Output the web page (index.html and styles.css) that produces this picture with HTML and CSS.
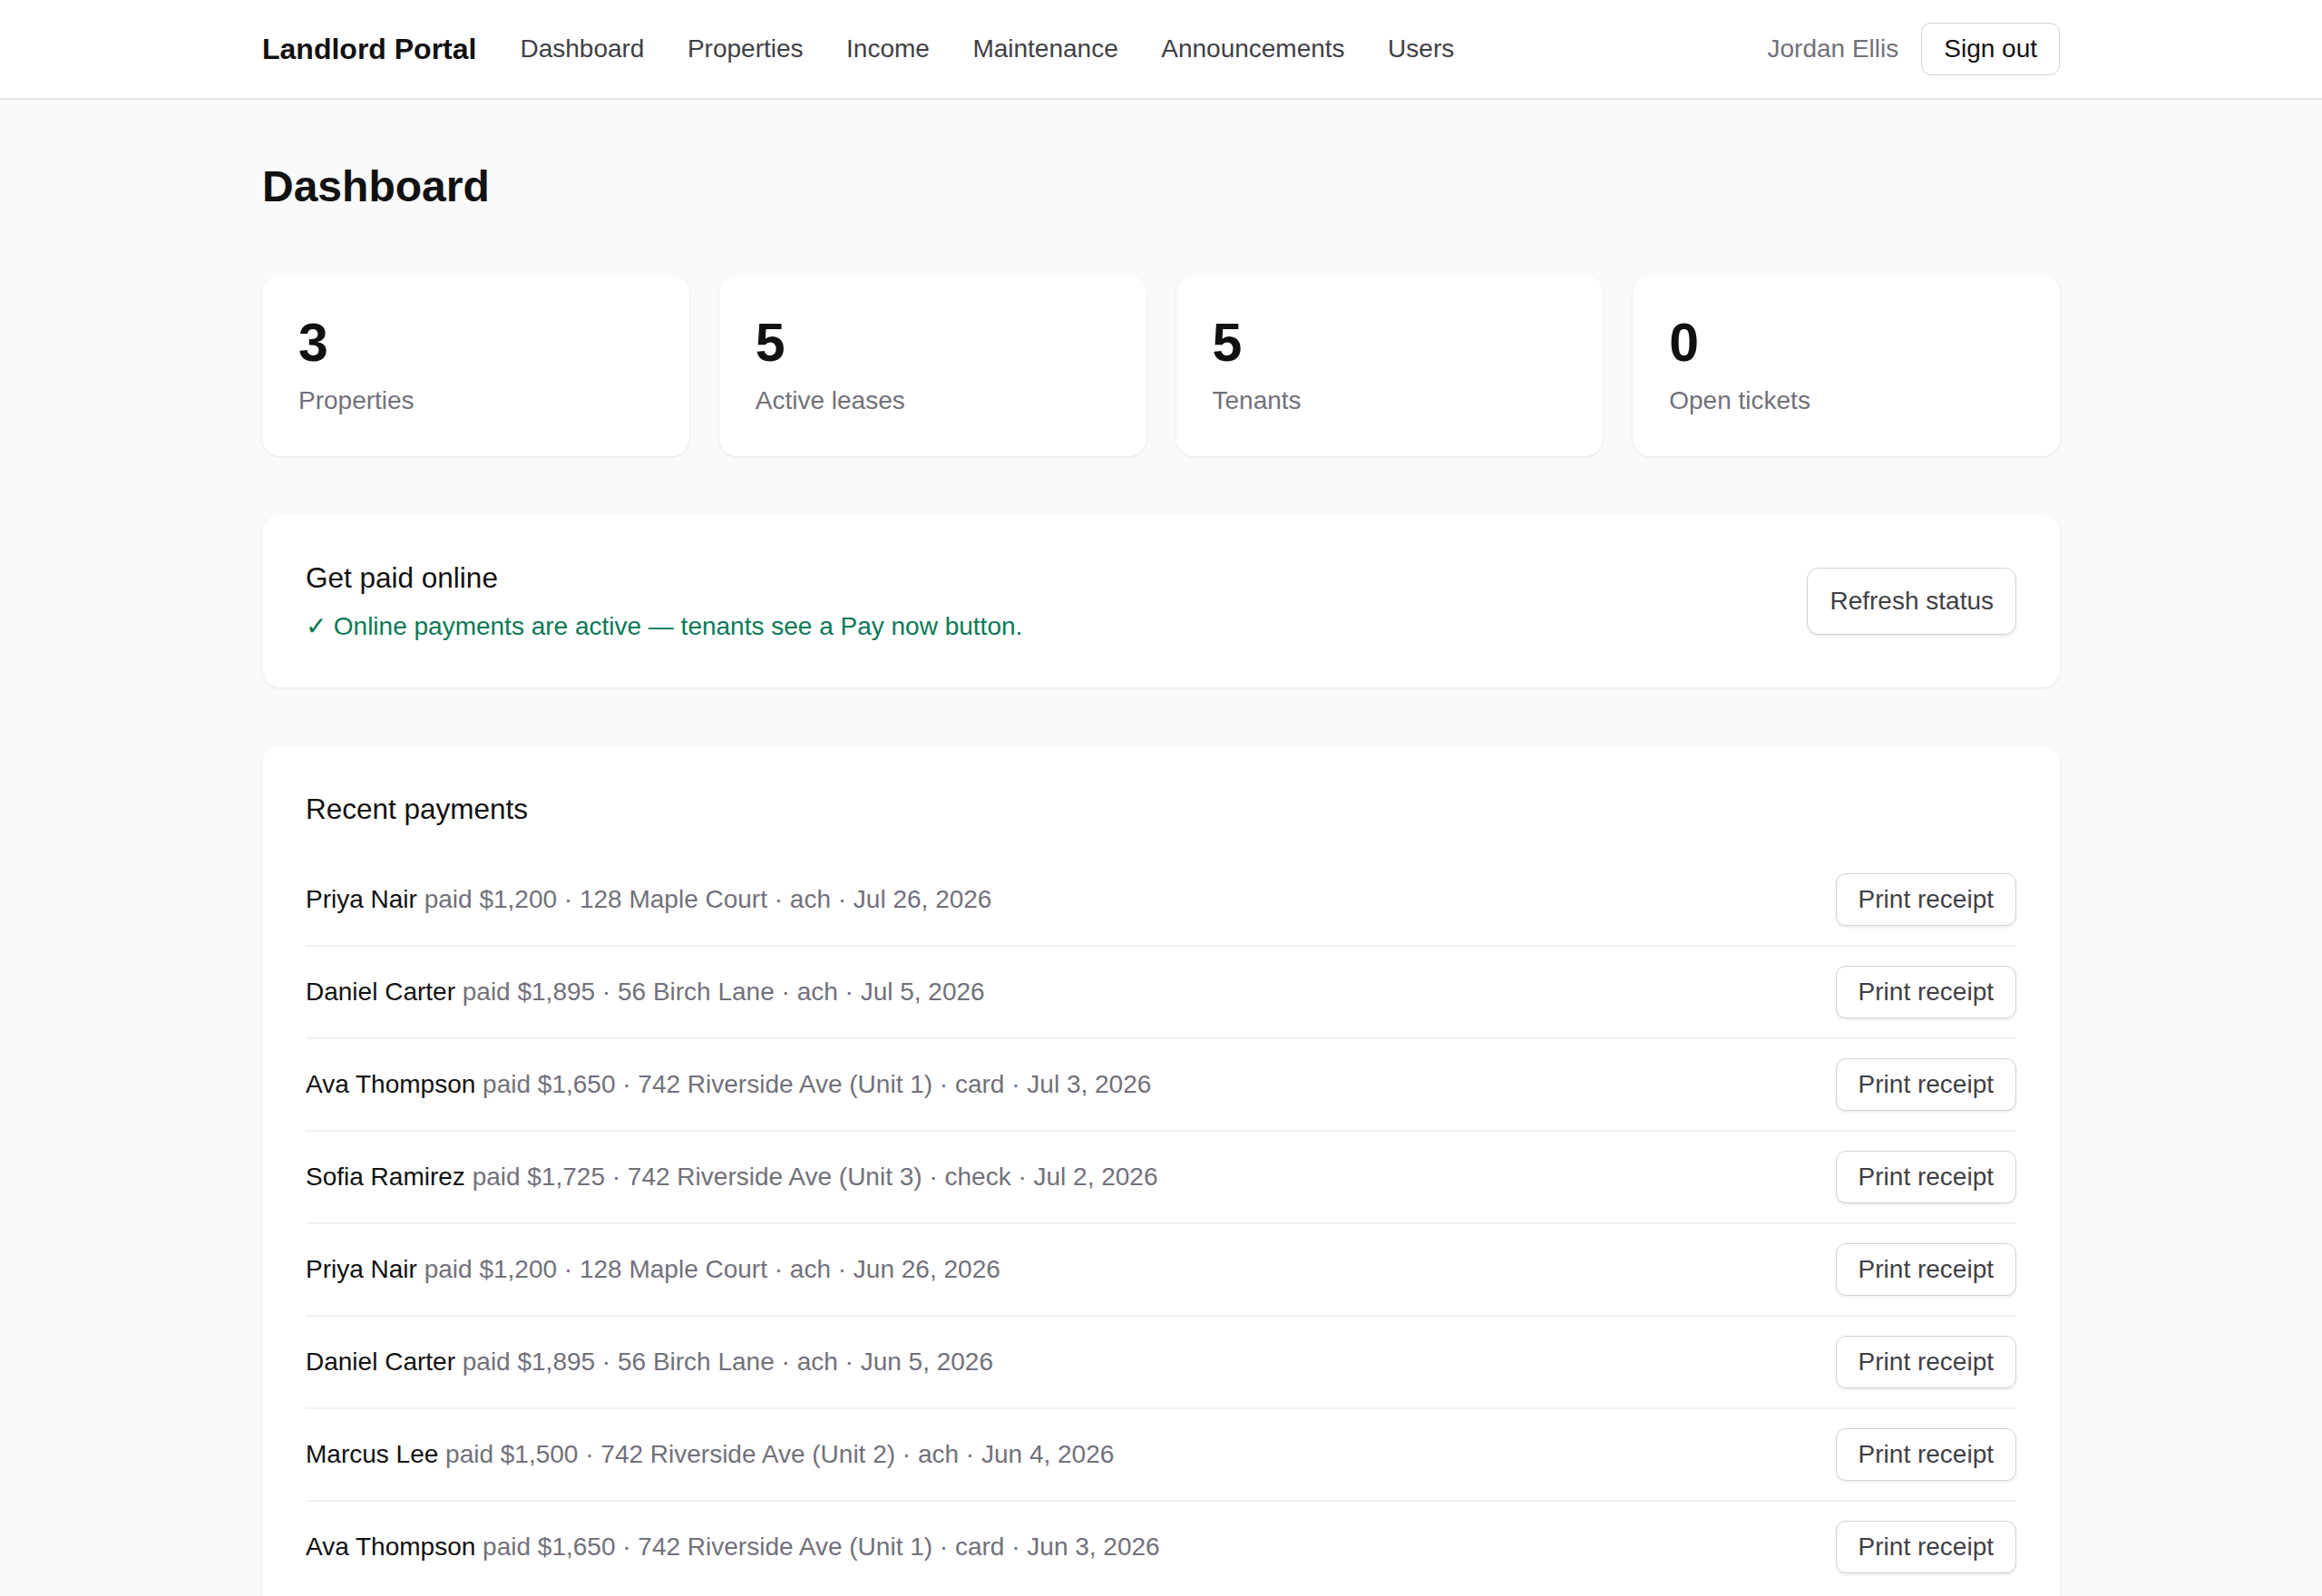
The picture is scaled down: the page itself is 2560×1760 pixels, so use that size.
FILE: index.html
```html
<!DOCTYPE html>
<html>
<head>
    <title>Landlord Portal - Dashboard</title>
    <link rel="stylesheet" href="styles.css">
</head>
<body>
    <header class="topbar">
        <div class="topbar-inner">
            <div class="brand">Landlord Portal</div>
            <nav class="nav">
                <a href="#">Dashboard</a>
                <a href="#">Properties</a>
                <a href="#">Income</a>
                <a href="#">Maintenance</a>
                <a href="#">Announcements</a>
                <a href="#">Users</a>
            </nav>
            <div class="user">
                <span class="user-name">Jordan Ellis</span>
                <button class="btn btn-dark">Sign out</button>
            </div>
        </div>
    </header>

    <main class="page">
        <h1>Dashboard</h1>

        <div class="stats">
            <div class="stat">
                <div class="stat-num">3</div>
                <div class="stat-label">Properties</div>
            </div>
            <div class="stat">
                <div class="stat-num">5</div>
                <div class="stat-label">Active leases</div>
            </div>
            <div class="stat">
                <div class="stat-num">5</div>
                <div class="stat-label">Tenants</div>
            </div>
            <div class="stat">
                <div class="stat-num">0</div>
                <div class="stat-label">Open tickets</div>
            </div>
        </div>

        <section class="panel panel-row">
            <div>
                <h2>Get paid online</h2>
                <div class="ok">✓ Online payments are active — tenants see a Pay now button.</div>
            </div>
            <button class="btn btn-big">Refresh status</button>
        </section>

        <section class="panel">
            <h2>Recent payments</h2>
            <div class="payments">
                <div class="pay">
                    <div><span class="who">Priya Nair</span> <span class="meta">paid $1,200 · 128 Maple Court · ach · Jul 26, 2026</span></div>
                    <button class="btn">Print receipt</button>
                </div>
                <div class="pay">
                    <div><span class="who">Daniel Carter</span> <span class="meta">paid $1,895 · 56 Birch Lane · ach · Jul 5, 2026</span></div>
                    <button class="btn">Print receipt</button>
                </div>
                <div class="pay">
                    <div><span class="who">Ava Thompson</span> <span class="meta">paid $1,650 · 742 Riverside Ave (Unit 1) · card · Jul 3, 2026</span></div>
                    <button class="btn">Print receipt</button>
                </div>
                <div class="pay">
                    <div><span class="who">Sofia Ramirez</span> <span class="meta">paid $1,725 · 742 Riverside Ave (Unit 3) · check · Jul 2, 2026</span></div>
                    <button class="btn">Print receipt</button>
                </div>
                <div class="pay">
                    <div><span class="who">Priya Nair</span> <span class="meta">paid $1,200 · 128 Maple Court · ach · Jun 26, 2026</span></div>
                    <button class="btn">Print receipt</button>
                </div>
                <div class="pay">
                    <div><span class="who">Daniel Carter</span> <span class="meta">paid $1,895 · 56 Birch Lane · ach · Jun 5, 2026</span></div>
                    <button class="btn">Print receipt</button>
                </div>
                <div class="pay">
                    <div><span class="who">Marcus Lee</span> <span class="meta">paid $1,500 · 742 Riverside Ave (Unit 2) · ach · Jun 4, 2026</span></div>
                    <button class="btn">Print receipt</button>
                </div>
                <div class="pay">
                    <div><span class="who">Ava Thompson</span> <span class="meta">paid $1,650 · 742 Riverside Ave (Unit 1) · card · Jun 3, 2026</span></div>
                    <button class="btn">Print receipt</button>
                </div>
            </div>
        </section>
    </main>
</body>
</html>
```

FILE: styles.css
```css
body { margin: 0; background: #fafafa; color: #111; font-family: "Liberation Sans", Arial, sans-serif; font-size: 28px; }
a { color: inherit; text-decoration: none; }

.topbar { background: #fff; border-bottom: 2px solid #e4e4e6; }
.topbar-inner { width: 1982px; margin: 0 auto; height: 108px; display: flex; align-items: center; }
.brand { font-weight: bold; font-size: 32px; margin-right: 48px; }
.nav { display: flex; gap: 47.5px; color: #3f3f46; }
.user { margin-left: auto; display: flex; align-items: center; gap: 25px; }
.user-name { color: #71717a; }

.btn { font-family: inherit; font-size: 28px; color: #3f3f46; background: #fff; border: 1px solid #d2d2d7; border-radius: 11px; padding: 12px 24px; box-shadow: 0 2px 3px rgba(0,0,0,0.07); cursor: pointer; }
.btn-dark { color: #111; box-shadow: none; }
.btn-big { padding: 20px 24px; border-radius: 13px; }

.page { width: 1982px; margin: 0 auto; padding-top: 68px; }
h1 { font-size: 48px; margin: 0 0 69.5px; }
h2 { font-size: 31.5px; font-weight: normal; margin: 0; line-height: 1.5; }

.stats { display: grid; grid-template-columns: repeat(4, 1fr); gap: 33px; margin-bottom: 64px; }
.stat { background: #fff; border-radius: 20px; padding: 41px 40px 45px; box-shadow: 0 1px 3px rgba(0,0,0,0.09); }
.stat-num { font-size: 59px; font-weight: bold; margin-bottom: 14px; }
.stat-label { color: #71717a; }

.panel { background: #fff; border-radius: 20px; padding: 47px 48px 49px; box-shadow: 0 1px 3px rgba(0,0,0,0.09); margin-bottom: 64px; line-height: 1.5; }
.panel-row { display: flex; align-items: center; justify-content: space-between; padding-bottom: 46px; }
.ok { color: #087a55; margin-top: 9px; }

.payments { margin-top: 26px; }
.pay { display: flex; align-items: center; justify-content: space-between; padding: 21px 0; border-bottom: 2px solid #f1f1f2; }
.pay:last-child { border-bottom: none; }
.who { color: #111; }
.meta { color: #71717a; }
```
